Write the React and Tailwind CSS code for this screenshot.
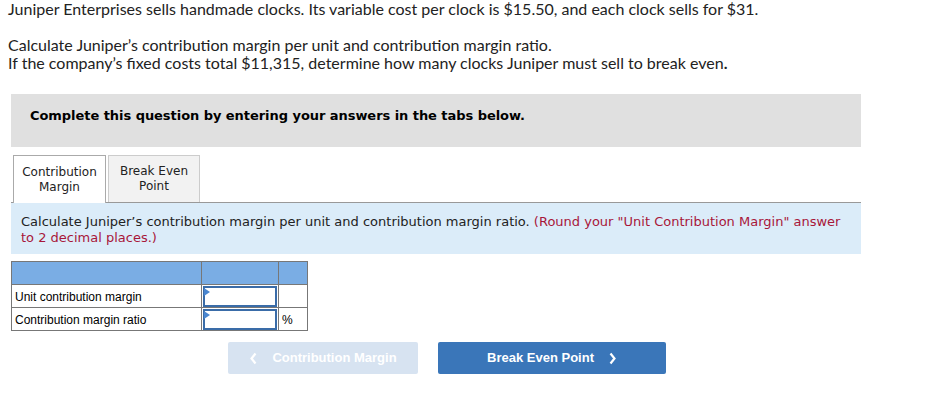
import React from 'react';

const verdana = { fontFamily: '"DejaVu Sans", Verdana, sans-serif' };

const App = () => {
    return (
        <div className="w-[933px] h-[411px] bg-white relative overflow-hidden">
            {/* question text */}
            <div className="pl-[8px] text-[16px] leading-[18px] text-[#222]" style={{ fontFamily: 'Lato, sans-serif' }}>
                <p>Juniper Enterprises sells handmade clocks. Its variable cost per clock is $15.50, and each clock sells for $31.</p>
                <p className="mt-[18px]">Calculate Juniper’s contribution margin per unit and contribution margin ratio.</p>
                <p>If the company’s fixed costs total $11,315, determine how many clocks Juniper must sell to break even<span className="font-bold">.</span></p>
            </div>

            <div className="ml-[11px] w-[850px]" style={verdana}>
                <div className="mt-[22px] h-[53px] bg-[#e0e0e0] pl-[19px] pt-[13px]">
                    <p className="text-[13px] leading-[18px] font-bold text-black tracking-[-0.05px]">Complete this question by entering your answers in the tabs below.</p>
                </div>

                {/* tabs */}
                <div className="mt-[8px] flex items-end border-b border-[#999] h-[48px]">
                    <div className="ml-[2px] w-[93px] h-[48px] -mb-px bg-white border border-b-0 border-[#aaa] flex items-center justify-center text-center text-[12px] leading-[15px] text-[#222]">
                        Contribution<br />Margin
                    </div>
                    <div className="ml-[2px] w-[92px] h-[47px] bg-[#f2f2f2] border border-b-0 border-[#ccc] flex items-center justify-center text-center text-[12px] leading-[15px] text-[#222]">
                        Break Even<br />Point
                    </div>
                </div>

                <div className="h-[51px] bg-[#dbecf9] pl-[10px] pr-[14px] pt-[11px] text-[13px] leading-[16px] text-[#222]">
                    Calculate Juniper’s contribution margin per unit and contribution margin ratio. <span className="text-[#a8173a]">(Round your "Unit Contribution Margin" answer to 2 decimal places.)</span>
                </div>

                {/* answer table */}
                <table className="mt-[7px] border-collapse text-[12px] text-black" style={{ fontFamily: '"Liberation Sans", Arial, sans-serif' }}>
                    <tbody>
                        <tr className="h-[23px] bg-[#7aade4]">
                            <td className="w-[190px] border border-[#777]"></td>
                            <td className="w-[77px] border border-[#777]"></td>
                            <td className="w-[29px] border border-[#777]"></td>
                        </tr>
                        <tr className="h-[23px]">
                            <td className="border border-[#777] pl-[3px] pt-[1px]">Unit contribution margin</td>
                            <td className="border border-[#777] p-0">
                                <div className="relative mx-[1px] h-[21px] border-2 border-[#3a6ca8] bg-white">
                                    <div className="absolute -left-[1px] top-0 w-0 h-0 border-t-[4px] border-b-[4px] border-l-[6px] border-t-transparent border-b-transparent border-l-[#4a86d0]" />
                                </div>
                            </td>
                            <td className="border border-[#777]"></td>
                        </tr>
                        <tr className="h-[23px]">
                            <td className="border border-[#777] pl-[3px] pt-[1px]">Contribution margin ratio</td>
                            <td className="border border-[#777] p-0">
                                <div className="relative mx-[1px] h-[21px] border-2 border-[#3a6ca8] bg-white">
                                    <div className="absolute -left-[1px] top-0 w-0 h-0 border-t-[4px] border-b-[4px] border-l-[6px] border-t-transparent border-b-transparent border-l-[#4a86d0]" />
                                </div>
                            </td>
                            <td className="border border-[#777] pl-[3px] pt-[1px]">%</td>
                        </tr>
                    </tbody>
                </table>
            </div>

            {/* navigation buttons */}
            <div className="mt-[11px] ml-[228px] flex gap-[20px] text-[13px] font-bold text-white" style={{ fontFamily: '"Liberation Sans", Arial, sans-serif' }}>
                <div className="w-[190px] h-[32px] rounded-[2px] bg-[#d7e3f1] flex items-center justify-center gap-[14px]">
                    <svg width="9" height="13" viewBox="0 0 9 13"><path d="M6.5 1.5 L2.5 6.5 L6.5 11.5" fill="none" stroke="white" strokeWidth="2.2" /></svg>
                    <span>Contribution Margin</span>
                </div>
                <div className="w-[228px] h-[32px] rounded-[2px] bg-[#3a76b9] flex items-center justify-center gap-[14px]">
                    <span>Break Even Point</span>
                    <svg width="9" height="13" viewBox="0 0 9 13"><path d="M2.5 1.5 L6.5 6.5 L2.5 11.5" fill="none" stroke="white" strokeWidth="2.2" /></svg>
                </div>
            </div>
        </div>
    );
};

export default App;
